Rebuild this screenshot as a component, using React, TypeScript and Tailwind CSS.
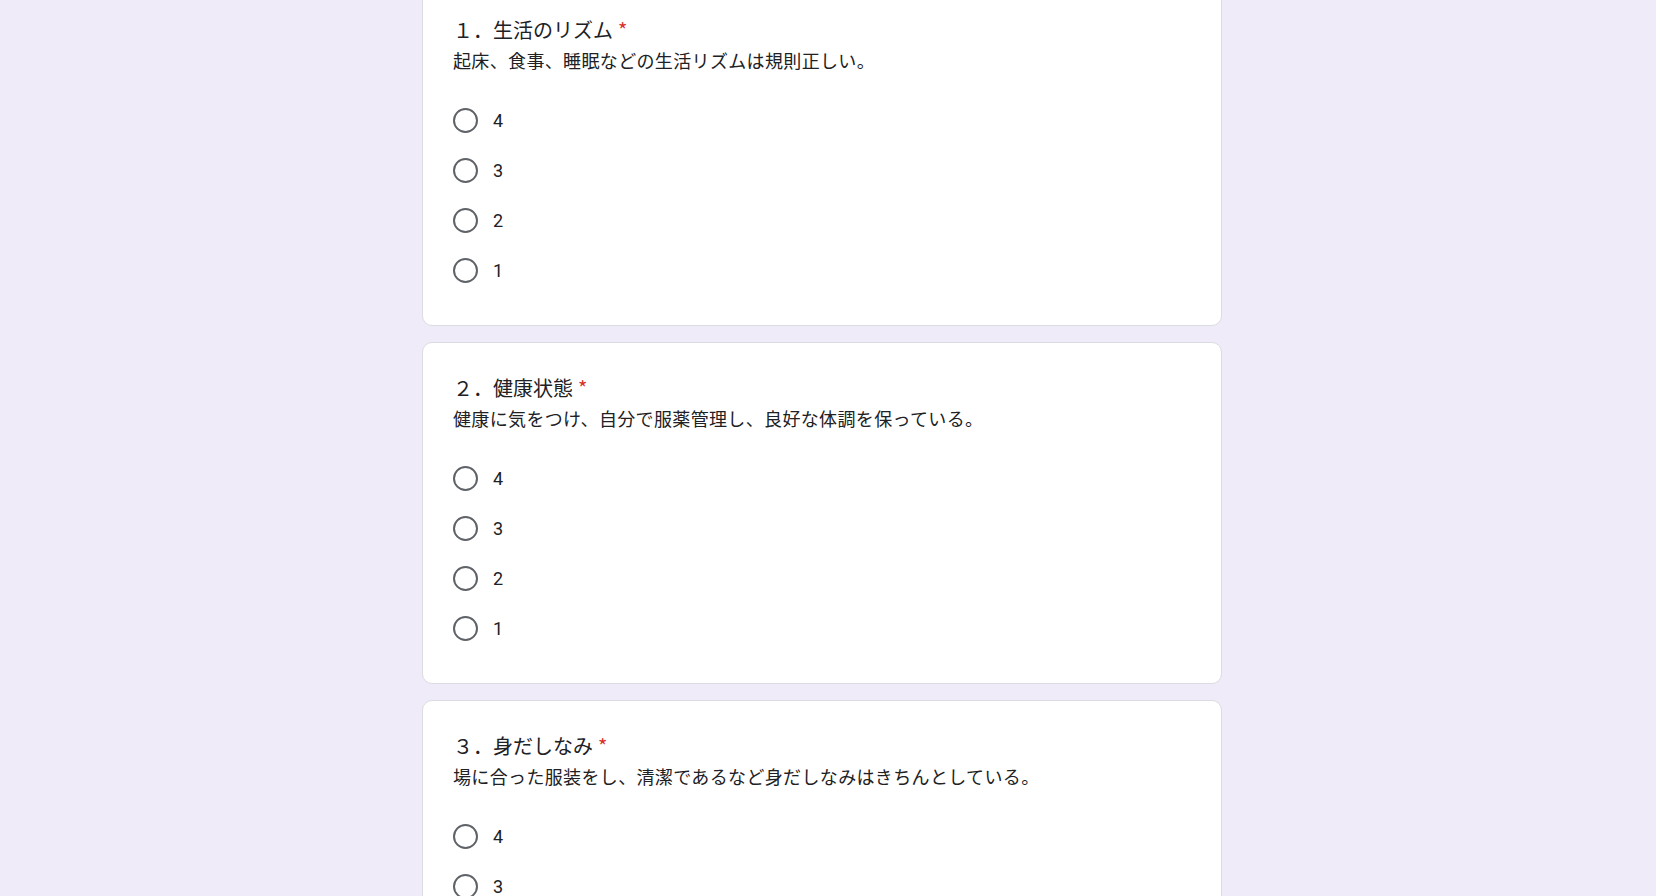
import React from "react";

type Q = { no: string; title: string; desc: string };

const questions: Q[] = [
  { no: "１．", title: "生活のリズム", desc: "起床、食事、睡眠などの生活リズムは規則正しい。" },
  { no: "２．", title: "健康状態", desc: "健康に気をつけ、自分で服薬管理し、良好な体調を保っている。" },
  { no: "３．", title: "身だしなみ", desc: "場に合った服装をし、清潔であるなど身だしなみはきちんとしている。" },
];

const options = ["4", "3", "2", "1"];

function Card({ q, first }: { q: Q; first?: boolean }) {
  return (
    <div
      className={
        "w-[800px] shrink-0 bg-white border border-[#dadce0] rounded-[10px] pl-[30px] pr-[30px] pt-[32px] pb-[30px] " +
        (first ? "-mt-[16px]" : "")
      }
    >
      <div className="text-[20px] leading-[26px] text-[#202124] whitespace-nowrap">
        {q.no}
        {q.title}
        <span className="text-[#d93025] pl-[5px]">*</span>
      </div>
      <div className="mt-[4px] text-[18px] tracking-[0.35px] leading-[26px] text-[#202124] whitespace-nowrap">{q.desc}</div>
      <div className="mt-[22px] flex flex-col">
        {options.map((o) => (
          <div key={o} className="h-[50px] flex items-center">
            <div className="w-[25px] h-[25px] rounded-full border-2 border-[#5f6368] shrink-0" />
            <span className="ml-[15px] text-[18px] text-[#202124] font-['Roboto','Noto_Sans_CJK_JP',sans-serif]">{o}</span>
          </div>
        ))}
      </div>
    </div>
  );
}

export default function App() {
  return (
    <div
      className="w-full h-[896px] overflow-hidden bg-[#f0ebf8] flex flex-col items-center gap-[16px] pr-[12px]"
      style={{ fontFamily: '"Noto Sans CJK JP", "Noto Sans", sans-serif' }}
    >
      {questions.map((q, i) => (
        <Card key={i} q={q} first={i === 0} />
      ))}
    </div>
  );
}
